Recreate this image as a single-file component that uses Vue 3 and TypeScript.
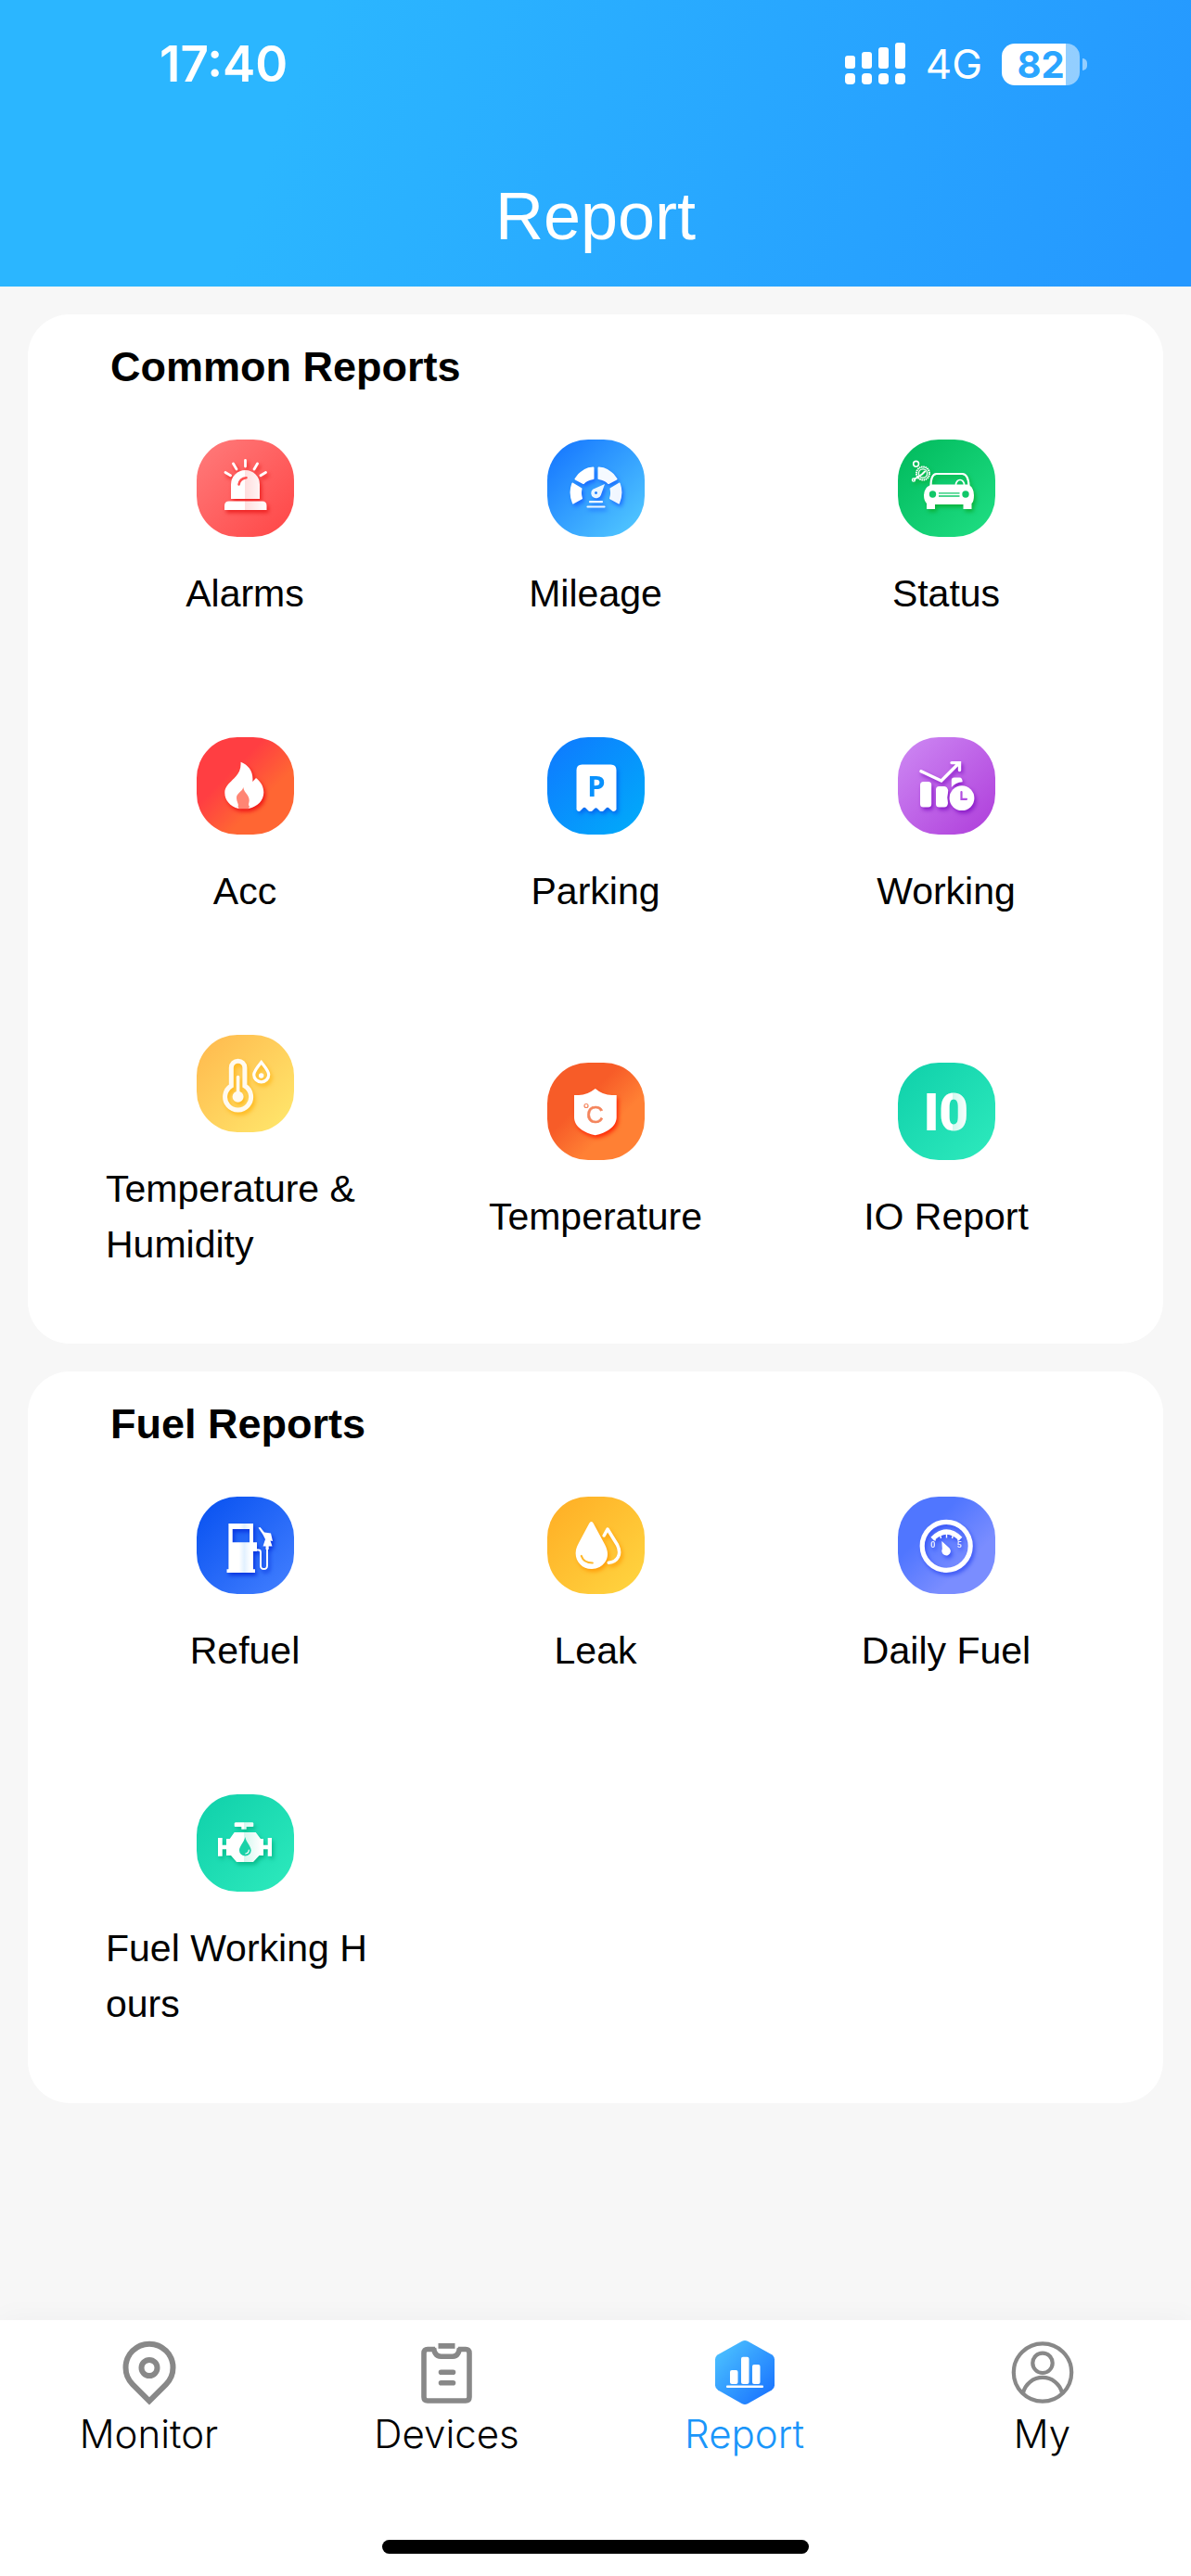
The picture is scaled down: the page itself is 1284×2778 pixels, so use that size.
<script setup lang="ts">
interface Report {
  label: string
  background: string
  shadow: string
  art: string
}

interface Section {
  title: string
  reports: Report[]
}

interface Tab {
  label: string
  active: boolean
  art: string
}

const sections: Section[] = [
  {
    title: 'Common Reports',
    reports: [
      {
        label: 'Alarms',
        background: 'linear-gradient(135deg, #ff7c7c, #ff4545)',
        shadow: '#ee2222',
        art: `
          <defs><linearGradient id="siren" gradientUnits="userSpaceOnUse" x1="30" y1="0" x2="76" y2="0">
            <stop offset=".48" stop-color="#fff"/><stop offset=".48" stop-color="#ffdede"/><stop offset="1" stop-color="#fff"/>
          </linearGradient></defs>
          <path fill="url(#siren)" d="M37 64V48.5a15.5 15.5 0 0 1 31 0V64zM30 76V71.5q0-5 5-5H70.500q5 0 5 5V76z"/>
          <path d="M45.500 48.500q1-6.500 8-7.300" fill="none" stroke="#ff5050" stroke-width="2.600" stroke-linecap="round"/>
          <path d="M52.500 22.500V29M39.500 26l3.500 6M31 35.500l5.500 3.200M65.500 26L62 32M74.500 35.500L69 38.700" fill="none" stroke="#fff" stroke-width="2.800" stroke-linecap="round"/>`,
      },
      {
        label: 'Mileage',
        background: 'linear-gradient(135deg, #1272ff, #55cdff)',
        shadow: '#1a6cff',
        art: `
          <g fill="#fff" stroke="#fff" stroke-width="2" stroke-linejoin="round">
            <path d="M28 68.500Q23.500 58 27.300 47.500L36.500 53Q35.200 58.500 37 63.500z"/>
            <path d="M30.500 42.500Q38 31 49.500 30.500V42Q42.500 43 39 47z"/>
            <path opacity=".96" d="M74.500 42.500Q67 31 55.500 30.500V42Q62.500 43 66 47z"/>
            <path opacity=".94" d="M77 68.500Q81.500 58 77.700 47.500L68.500 53Q69.800 58.500 68 63.500z"/>
          </g>
          <path fill="#eaf6ff" fill-rule="evenodd" d="M62 48L57.800 60A5.500 5.500 0 1 1 49 53.800zM52.500 56a1.500 1.500 0 1 0 .01 0z"/>
          <path d="M46 67.200H59M43.500 72.500H61.500" stroke="#eaf6ff" stroke-width="2.200" stroke-linecap="round"/>`,
      },
      {
        label: 'Status',
        background: 'linear-gradient(135deg, #00b95c, #20df84)',
        shadow: '#0ab23c',
        art: `
          <g fill="none" stroke="#fff">
            <path stroke-width="2.200" d="M35.500 50Q35.500 37.500 41.500 37H69.500Q76 37.500 76.500 50"/>
            <path stroke-width="1.700" d="M62.500 49a4.500 5.500 0 0 1 9 0"/>
            <circle cx="19.600" cy="26.300" r="2.900" stroke-width="1.600"/>
            <circle cx="27" cy="36.500" r="7" stroke-width="2" stroke-dasharray="1.600 .6"/>
            <circle cx="27" cy="36.500" r="4.600" stroke-width="1.300"/>
            <path stroke-width="2" stroke-linecap="round" d="M17.500 43L26 37.500L29 34.500"/>
            <circle cx="17" cy="43.500" r="1.600" stroke-width="1.200"/>
          </g>
          <path fill="#fff" d="M36 48.500H76Q82 52 82 60Q82 67 79.500 69V75H70.500V70H40V75H31V69Q28 66 28 60Q28 52 36 48.500z"/>
          <circle cx="37.500" cy="59" r="3.700" fill="#10c768"/><circle cx="73" cy="59" r="3.700" fill="#10c768"/>
          <path d="M44 57.800H66.500M44 61H66.500" stroke="#10c768" stroke-width="1.300"/>`,
      },
      {
        label: 'Acc',
        background: 'linear-gradient(135deg, #ff3e42 35%, #ff6633 66%)',
        shadow: '#f01818',
        art: `
          <path fill="#fff" d="M47.500 26.700C56 30 61.500 37 60.300 48L64 44C69 48 72.300 53 72.300 59.500C72.300 68 66 75 56 77H45C36 74.500 30.300 68 30.300 60C30.300 47 49 45 47.500 26.700z"/>
          <path fill="#ff8574" d="M50.300 54C51 60 56.700 62 56.700 68C56.700 71 55 73 57 74.500L56 77.200H45.500L44.500 74.500C46 73 43 70 43 65C43.300 60 49 59 50.300 54z"/>`,
      },
      {
        label: 'Parking',
        background: 'linear-gradient(135deg, #0f78ff, #00adfa)',
        shadow: '#0668f0',
        art: `
          <path fill="#fff" d="M31.500 35.500q0-6 6-6H68.500q6 0 6 6V78q-2 3-4.500 1.500L67 77q-2-2.500-4 0L60.500 79.500q-2 1-4 0L54 77q-1.500-1.500-3 0L48.500 79.500q-2 1-4 0L42 77q-2-2.500-4 0L35.500 79.500Q33 81 31.500 78z"/>
          <text x="53" y="64" text-anchor="middle" font-family="Noto Sans, sans-serif" font-weight="700" font-size="31" fill="#0891fd">P</text>`,
      },
      {
        label: 'Working',
        background: 'linear-gradient(135deg, #ce8af4, #ae3cda)',
        shadow: '#8a1cc8',
        art: `
          <rect x="24" y="48" width="12.200" height="27.500" rx="3.500" fill="#fff"/>
          <path fill="#fff" d="M41 56.500q0-3.500 3.500-3.500H50q2 0 3 1.500Q55 57 54 60Q52.500 65 54 71Q53.500 75.500 50 75.500H44.500q-3.500 0-3.500-3.500z"/>
          <circle cx="69" cy="65.700" r="13.400" fill="#fff"/>
          <path fill="#fff" d="M57.800 54V46.500q0-3 3-3H66.500q3 0 3.200 4.800Q62 49 57.800 54z"/>
          <path d="M68.500 59V66.800H74" fill="none" stroke="#b14ee0" stroke-width="2.200" stroke-linecap="round"/>
          <path d="M25 36.800L46.800 47L65.500 28.300M58 27.600H66.500V35.500" fill="none" stroke="#fff" stroke-width="3.400" stroke-linecap="round"/>`,
      },
      {
        label: 'Temperature & Humidity',
        background: 'linear-gradient(135deg, #ffb84d, #ffe96d)',
        shadow: '#ffb81c',
        art: `
          <g fill="none" stroke="#fff">
            <path stroke="#fffaf0" stroke-width="5" d="M37.300 55V35.500a7.300 7.300 0 0 1 14.600 0V55a14 14 0 1 1-14.600 0z"/>
            <path stroke="#fffaf0" stroke-width="3.600" stroke-linecap="round" d="M44.600 45.500V62"/>
            <path stroke-width="3.200" d="M69.700 29.500C66 34 61.700 39 61.700 43a8 7.800 0 0 0 16 0C77.700 39 73 34 69.700 29.500z"/>
          </g>
          <circle cx="44.600" cy="66.700" r="6" fill="#fffaf0"/><circle cx="69.700" cy="44" r="2.700" fill="#fff"/>`,
      },
      {
        label: 'Temperature',
        background: 'linear-gradient(135deg, #f75c28 38%, #ff8034 66%)',
        shadow: '#ff2a08',
        art: `
          <path fill="#fff" d="M51.800 28Q43 35 34 35H29V59C29 69 40 76 51.800 78.300C63.500 76 74.700 69 74.700 59V35H69.600Q60 35 51.800 28z"/>
          <circle cx="42" cy="46.500" r="2" fill="none" stroke="#f4845c" stroke-width="1.200"/>
          <text x="51.500" y="64.500" text-anchor="middle" font-family="Liberation Sans, sans-serif" font-size="26" fill="#f4845c" stroke="#f4845c" stroke-width=".5">C</text>`,
      },
      {
        label: 'IO Report',
        background: 'linear-gradient(135deg, #0fd0aa, #2eeabd)',
        shadow: 'transparent',
        art: `
          <defs><linearGradient id="io" gradientUnits="userSpaceOnUse" x1="29" y1="0" x2="76" y2="0">
            <stop offset=".64" stop-color="#fff"/><stop offset=".64" stop-color="#d2f9ef"/><stop offset="1" stop-color="#fff"/>
          </linearGradient></defs>
          <text x="52" y="73" text-anchor="middle" font-family="Roboto, sans-serif" font-weight="900" font-size="55" fill="url(#io)">I0</text>`,
      },
    ],
  },
  {
    title: 'Fuel Reports',
    reports: [
      {
        label: 'Refuel',
        background: 'linear-gradient(135deg, #0650f0, #4480ff)',
        shadow: '#0a35e0',
        art: `
          <defs><linearGradient id="pump" x1="0" x2="1"><stop offset=".4" stop-color="#fff"/><stop offset=".58" stop-color="#e2f1ff"/><stop offset=".8" stop-color="#fff"/></linearGradient></defs>
          <path fill="url(#pump)" fill-rule="evenodd" d="M34.400 29H61V49.300H65V59H61V78.300H63V82H32.500V78.300H34.400zM38.700 35V49.300H57V35z"/>
          <path fill="none" stroke="#fff" stroke-width="1.900" d="M65 57.500h1.500q2.500 0 2.500 2.500V74.500q0 3.500 3.500 3.500t3.500-3.500V55"/>
          <path fill="#fff" d="M66.500 33.500L68.500 33L73 38.500L80 39.500L82 48L79.500 47.500L81.500 53.500H77.700V57H74.500V53.500H71.500L74 46L71.500 41z"/>`,
      },
      {
        label: 'Leak',
        background: 'linear-gradient(135deg, #ffad24, #ffd641)',
        shadow: '#ff9e0a',
        art: `
          <path fill="#fff" d="M47.500 27q1.500 0 2.500 2.200L62 51.500C66 59 66 65.500 62 71A17.300 17.300 0 0 1 47.500 78C38 78 30.600 70.500 30.600 61C30.600 56 33 51.500 35.500 47L45 29.200q1-2.200 2.500-2.200z"/>
          <path d="M36.800 64q2.500 7.500 12 7.500" fill="none" stroke="#ffb82b" stroke-width="2.200" stroke-linecap="round"/>
          <path d="M61.200 42l3.800-7 10.500 17c5 10 .5 18.500-9.300 19.200" fill="none" stroke="#fff" stroke-width="3.500" stroke-linecap="round" stroke-linejoin="round"/>`,
      },
      {
        label: 'Daily Fuel',
        background: 'linear-gradient(135deg, #5076ff 32%, #7a8dff 70%)',
        shadow: '#3a55f5',
        art: `
          <circle cx="52.200" cy="53.300" r="26" fill="none" stroke="#fff" stroke-width="5.200"/>
          <path d="M37.200 45.500Q52.500 30.500 67.600 45.500" fill="none" stroke="#fff" stroke-width="5"/>
          <path d="M38 44l2.500 3.500M45.500 41l1 4M52.500 40V44.500M59.500 41l-1 4M67 44l-2.500 3.500" stroke="#fff" stroke-width="1.400"/>
          <path fill="#fff" d="M47.300 48L54.500 54.500Q57.500 57 56.700 60A4.800 4.800 0 1 1 47.800 56.500z"/>
          <text x="37.800" y="55" text-anchor="middle" font-family="Roboto, sans-serif" font-weight="700" font-size="9" fill="#e6eaff">0</text>
          <text x="66.300" y="55" text-anchor="middle" font-family="Roboto, sans-serif" font-weight="700" font-size="9" fill="#e6eaff">5</text>`,
      },
      {
        label: 'Fuel Working Hours',
        background: 'linear-gradient(135deg, #0fd0aa, #2eeabd)',
        shadow: '#08bb8c',
        art: `
          <defs><linearGradient id="valve" gradientUnits="userSpaceOnUse" x1="23" y1="0" x2="81" y2="0">
            <stop offset=".48" stop-color="#fff"/><stop offset=".48" stop-color="#d5f7ef"/><stop offset=".8" stop-color="#fff"/>
          </linearGradient></defs>
          <path fill="url(#valve)" d="M41.700 30.300H60.500L61.300 31.300V34.500L60.500 35H53.700V37.700H48.300V35H41.500L40.700 34.500V31.300zM40.700 41H63.700L69 48H72V54.700H76.700V47H81V66.700H76.700V59.300H72V66H67.500L61 73H43L37 66H32V59.300H27.700V66.700H23V47H27.700V54.700H32V48H35.700z"/>
          <path fill="#19d2a8" d="M52.300 46C53.500 52 58.700 56 58.700 60.500a6.300 6 0 0 1-12.700 0C46 56 51 52 52.300 46z"/>
          <path d="M56.300 60q0 3.500-3.500 4" fill="none" stroke="#fff" stroke-width="1.200" stroke-linecap="round"/>`,
      },
    ],
  },
]

const tabs: Tab[] = [
  {
    label: 'Monitor',
    active: false,
    art: `
      <g fill="none" stroke="#888" stroke-width="6">
        <path d="M36 66.300L18 48.300A25.500 25.500 0 1 1 54 48.300z"/><circle cx="36" cy="30.500" r="8.500"/>
      </g>`,
  },
  {
    label: 'Devices',
    active: false,
    art: `
      <path fill="#888" d="M26.500 4H44.500V9.800H26.500z"/>
      <g fill="none" stroke="#888" stroke-width="5.600">
        <path d="M23 10.500H15q-4 0-4 4V62q0 4 4 4H56q4 0 4-4V14.500q0-4-4-4H48"/>
        <path d="M21.500 9q1 9 8 9.300H42Q48.500 18 49.500 9"/>
        <path stroke-linecap="round" d="M29.500 35.300H42.500M29.500 46.700H42.500"/>
      </g>`,
  },
  {
    label: 'Report',
    active: true,
    art: `
      <defs><linearGradient id="hex" x1="0" y1="0" x2="1" y2="1"><stop offset=".1" stop-color="#4abfff"/><stop offset=".9" stop-color="#1a75ff"/></linearGradient></defs>
      <path fill="url(#hex)" d="M33 1.800q3-1.600 6 0L65 16.300q3 2 3 5V49.500q0 3-3 5L39 69.300q-3 1.600-6 0L7 54.500q-3-2-3-5V21.300q0-3 3-5z"/>
      <g fill="#fff"><rect x="20" y="33" width="8.500" height="15" rx="2"/><rect x="32" y="18.700" width="8.500" height="29.300" rx="2"/><rect x="44" y="27" width="8.500" height="21" rx="2"/><rect x="16" y="49.500" width="40" height="2.500" rx="1"/></g>`,
  },
  {
    label: 'My',
    active: false,
    art: `
      <g fill="none" stroke="#888" stroke-width="4.200">
        <circle cx="36" cy="35.500" r="31.200"/><circle cx="36" cy="25.300" r="10.700"/>
        <path d="M15 57.500a21.600 21.600 0 0 1 42 0"/>
      </g>`,
  },
]
</script>

<template>
  <div class="app">
    <header class="header">
      <div class="status">
        <span class="time">17:40</span>
        <div class="indicators">
          <svg class="signal" viewBox="0 0 66 46" fill="#fff" aria-hidden="true">
            <rect x="0" y="14" width="11" height="14" rx="3" />
            <rect x="18" y="10" width="11" height="18" rx="3" />
            <rect x="36" y="5" width="11" height="23" rx="3" />
            <rect x="54" y="0" width="11" height="28" rx="3" />
            <rect v-for="i in 4" :key="i" :x="(i - 1) * 18" y="33" width="11" height="12" rx="4" />
          </svg>
          <span class="network">4G</span>
          <div class="battery"><span class="level">82</span></div>
        </div>
      </div>
      <h1 class="title">Report</h1>
    </header>

    <main class="content">
      <section v-for="section in sections" :key="section.title" class="card">
        <h2 class="heading">{{ section.title }}</h2>
        <div class="grid">
          <button v-for="report in section.reports" :key="report.label" type="button" class="report">
            <span class="badge" :style="{ background: report.background }">
              <svg
                viewBox="0 0 105 105"
                aria-hidden="true"
                :style="{ filter: `drop-shadow(2px 3px 2px ${report.shadow})` }"
                v-html="report.art"
              ></svg>
            </span>
            <span class="label">{{ report.label }}</span>
          </button>
        </div>
      </section>
    </main>

    <nav class="tabbar">
      <div class="tabs">
        <a v-for="tab in tabs" :key="tab.label" href="#" class="tab" :class="{ active: tab.active }">
          <svg class="tab-icon" viewBox="0 0 72 72" aria-hidden="true" v-html="tab.art"></svg>
          <span>{{ tab.label }}</span>
        </a>
      </div>
      <div class="home"></div>
    </nav>
  </div>
</template>

<style>
body {
  margin: 0;
  background: #f7f7f7;
}
</style>

<style scoped>
.app {
  display: flex;
  flex-direction: column;
  min-height: 100vh;
  background: #f7f7f7;
  color: #000;
  font-family: "Liberation Sans", Arial, sans-serif;
}

.header {
  background: linear-gradient(110deg, #2bb6ff 25%, #2598ff 98%);
  color: #fff;
}

.status {
  display: flex;
  align-items: center;
  justify-content: space-between;
  height: 138px;
  padding: 0 120px 0 172px;
  font-family: Inter, sans-serif;
}

.time {
  font-size: 53px;
  font-weight: 600;
}

.indicators {
  display: flex;
  align-items: center;
  gap: 21px;
}

.signal {
  width: 66px;
  height: 46px;
}

.network {
  font-size: 44px;
  line-height: 46px;
}

.battery {
  position: relative;
  width: 84px;
  height: 45px;
  border-radius: 14px;
  background: linear-gradient(90deg, #fff 82%, rgba(255, 255, 255, 0.5) 82%);
  color: #2aa5ff;
  text-align: center;
}

.battery::after {
  content: "";
  position: absolute;
  top: 16px;
  right: -8px;
  width: 5px;
  height: 13px;
  border-radius: 0 5px 5px 0;
  background: rgba(255, 255, 255, 0.5);
}

.level {
  font-size: 40px;
  font-weight: 700;
  line-height: 45px;
}

.title {
  margin: 0;
  padding: 53px 0 34px;
  font-size: 72px;
  font-weight: 400;
  line-height: 84px;
  text-align: center;
}

.content {
  display: flex;
  flex: 1;
  flex-direction: column;
  gap: 30px;
  padding: 30px;
}

.card {
  padding: 27px 45px 0;
  border-radius: 45px;
  background: #fff;
}

.heading {
  margin: 0;
  padding-left: 44px;
  font-size: 45px;
  font-weight: 700;
  line-height: 60px;
}

.grid {
  display: grid;
  grid-template-columns: repeat(3, 1fr);
}

.report {
  display: flex;
  flex-direction: column;
  align-items: center;
  justify-content: center;
  gap: 31px;
  padding: 48px 0 77px;
  border: 0;
  background: none;
  color: inherit;
  font-family: inherit;
  font-size: 41px;
  line-height: 60px;
  text-align: left;
}

.badge {
  width: 105px;
  height: 105px;
  border-radius: 44px;
}

.badge svg {
  display: block;
  width: 100%;
  height: 100%;
}

.label {
  max-width: 300px;
  word-break: break-all;
}

.tabbar {
  display: flex;
  flex-direction: column;
  align-items: center;
  justify-content: space-between;
  gap: 87px;
  padding: 21px 0 24px;
  background: #fff;
  box-shadow: 0 0 30px rgba(0, 0, 0, 0.04);
}

.tabs {
  display: flex;
  width: 100%;
}

.tab {
  display: flex;
  flex: 1;
  flex-direction: column;
  align-items: center;
  gap: 3px;
  color: #000;
  font-family: Inter, sans-serif;
  font-size: 42px;
  font-weight: 300;
  line-height: 54px;
  text-decoration: none;
}

.tab.active {
  color: #1a96fa;
}

.tab-icon {
  width: 72px;
  height: 72px;
}

.home {
  width: 460px;
  height: 15px;
  border-radius: 8px;
  background: #000;
}
</style>
